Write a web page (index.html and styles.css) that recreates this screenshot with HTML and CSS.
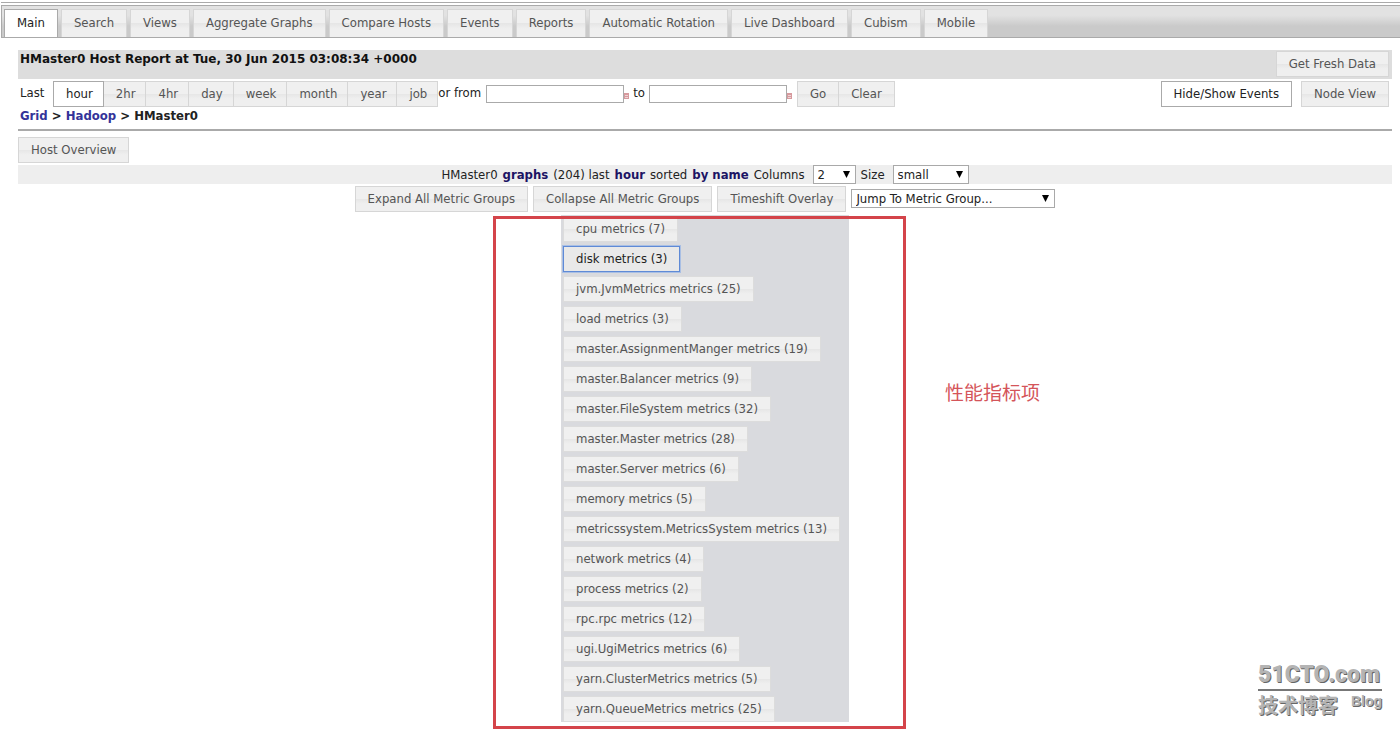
FILE: index.html
```html
<!DOCTYPE html>
<html lang="en">
<head>
<meta charset="utf-8">
<title>HMaster0 Host Report</title>
<link rel="stylesheet" href="styles.css">
</head>
<body>
<nav class="tabs">
<a class="btn tab active" href="#">Main</a>
<a class="btn tab" href="#">Search</a>
<a class="btn tab" href="#">Views</a>
<a class="btn tab" href="#">Aggregate Graphs</a>
<a class="btn tab" href="#">Compare Hosts</a>
<a class="btn tab" href="#">Events</a>
<a class="btn tab" href="#">Reports</a>
<a class="btn tab" href="#">Automatic Rotation</a>
<a class="btn tab" href="#">Live Dashboard</a>
<a class="btn tab" href="#">Cubism</a>
<a class="btn tab" href="#">Mobile</a>
</nav>
<main class="page">
<header class="title-bar">
<h1 class="title">HMaster0 Host Report at Tue, 30 Jun 2015 03:08:34 +0000</h1>
<button class="btn" type="button">Get Fresh Data</button>
</header>
<form class="range">
<span class="last">Last</span>
<div class="joined periods">
<button class="btn active" type="button">hour</button>
<button class="btn" type="button">2hr</button>
<button class="btn" type="button">4hr</button>
<button class="btn" type="button">day</button>
<button class="btn" type="button">week</button>
<button class="btn" type="button">month</button>
<button class="btn" type="button">year</button>
<button class="btn" type="button">job</button>
</div>
<label class="from" for="cs">or from</label>
<input class="date" id="cs" type="text">
<svg class="cal" viewBox="0 0 5 6" aria-hidden="true"><path fill="#d79a9e" d="M0 0h5v6H0z"/><path fill="#efd5d6" d="M1 2h3v1H1zM1 4h3v1H1z"/></svg>
<label class="to" for="ce">to</label>
<input class="date" id="ce" type="text">
<svg class="cal" viewBox="0 0 5 6" aria-hidden="true"><path fill="#d79a9e" d="M0 0h5v6H0z"/><path fill="#efd5d6" d="M1 2h3v1H1zM1 4h3v1H1z"/></svg>
<div class="joined submit">
<button class="btn" type="button">Go</button>
<button class="btn" type="button">Clear</button>
</div>
<div class="views">
<button class="btn active" type="button">Hide/Show Events</button>
<button class="btn" type="button">Node View</button>
</div>
</form>
<div class="crumbs"><a href="#">Grid</a> &gt; <a href="#">Hadoop</a> &gt; HMaster0</div>
<div class="overview"><button class="btn" type="button">Host Overview</button></div>
<div class="graph-bar">
<span>HMaster0</span> <b>graphs</b> <span>(204) last</span> <b>hour</b> <span>sorted</span> <b>by name</b>
<label for="cols">Columns</label>
<span class="pick cols"><select id="cols"><option>2</option></select><svg class="arrow" viewBox="0 0 7 7" aria-hidden="true"><path d="M0 0h7L3.500 7z"/></svg></span>
<label for="size">Size</label>
<span class="pick size"><select id="size"><option>small</option></select><svg class="arrow" viewBox="0 0 7 7" aria-hidden="true"><path d="M0 0h7L3.500 7z"/></svg></span>
</div>
<div class="group-bar">
<button class="btn" type="button">Expand All Metric Groups</button>
<button class="btn" type="button">Collapse All Metric Groups</button>
<button class="btn" type="button">Timeshift Overlay</button>
<span class="pick jump"><select aria-label="Metric group"><option>Jump To Metric Group...</option></select><svg class="arrow" viewBox="0 0 7 7" aria-hidden="true"><path d="M0 0h7L3.500 7z"/></svg></span>
</div>
<section class="metrics">
<button class="btn" type="button">cpu metrics (7)</button>
<button class="btn focused" type="button">disk metrics (3)</button>
<button class="btn" type="button">jvm.JvmMetrics metrics (25)</button>
<button class="btn" type="button">load metrics (3)</button>
<button class="btn" type="button">master.AssignmentManger metrics (19)</button>
<button class="btn" type="button">master.Balancer metrics (9)</button>
<button class="btn" type="button">master.FileSystem metrics (32)</button>
<button class="btn" type="button">master.Master metrics (28)</button>
<button class="btn" type="button">master.Server metrics (6)</button>
<button class="btn" type="button">memory metrics (5)</button>
<button class="btn" type="button">metricssystem.MetricsSystem metrics (13)</button>
<button class="btn" type="button">network metrics (4)</button>
<button class="btn" type="button">process metrics (2)</button>
<button class="btn" type="button">rpc.rpc metrics (12)</button>
<button class="btn" type="button">ugi.UgiMetrics metrics (6)</button>
<button class="btn" type="button">yarn.ClusterMetrics metrics (5)</button>
<button class="btn" type="button">yarn.QueueMetrics metrics (25)</button>
<div class="frame"></div>
<p class="note" lang="zh">性能指标项</p>
</section>
</main>
<aside class="mark">
<div class="mark-site">51CTO.com</div>
<div class="mark-row"><span class="mark-cn" lang="zh">技术博客</span><span class="mark-blog">Blog</span></div>
</aside>
</body>
</html>
```
FILE: styles.css
```css
* { box-sizing: border-box; }
body {
  margin: 0;
  padding-top: 2px;
  font: 13px/16px "DejaVu Sans Condensed", "DejaVu Sans", sans-serif;
  color: #222;
  background: #fff;
  position: relative;
}
.btn {
  display: block;
  margin: 0;
  padding: 3px 12px;
  border: 1px solid #d6d6d6;
  background: linear-gradient(#f0f0f0 50%, #e6e6e6 50%, #efefef 70%);
  color: #555;
  font: inherit;
  line-height: 18px;
  text-decoration: none;
  white-space: nowrap;
}
.btn.active { background: #fff; border-color: #aaa; color: #222; }
.tabs {
  display: flex;
  gap: 3px;
  margin: 3px 0 0 1px;
  padding: 3px 2px 0;
  border: 1px solid #aaa;
  border-right: 0;
  background: linear-gradient(#e2e2e2 30%, #cacaca 65%);
  position: relative;
}
.tabs::before {
  content: "";
  position: absolute;
  inset: -4px 0 auto -1px;
  border-top: 1px solid #aaa;
}
.tab { padding: 4px 12px 5px; border-bottom: 0; }
.page { padding: 12px 8px 12px 18px; }
.title-bar {
  display: flex;
  justify-content: space-between;
  align-items: flex-start;
  padding: 1px 3px 2px 2px;
  background: #ddd;
}
.title { margin: 0; font: bold 12px/16px "DejaVu Sans", sans-serif; color: #111; }
.range { display: flex; align-items: flex-start; padding: 2px 3px 0 2px; }
.last { width: 33px; line-height: 24px; }
.joined { display: flex; }
.joined .btn + .btn { border-left: 0; }
.periods .btn { padding-right: 10px; }
.from, .to { line-height: 24px; }
.from { margin-right: 5px; }
.to { margin: 0 4px; }
.date {
  width: 138px;
  height: 18px;
  margin: 4px 0 0;
  border: 1px solid #aaa;
  background: #fff;
  font: inherit;
}
.cal { width: 5px; height: 6px; margin-top: 12px; }
.submit { margin-left: 5px; }
.views { display: flex; gap: 9px; margin-left: auto; }
.crumbs {
  padding: 0 2px 4px;
  border-bottom: 2px solid #aaa;
  font-weight: bold;
  line-height: 18px;
}
.crumbs a { color: #339; text-decoration: none; }
.overview { display: flex; padding: 6px 0 2px; }
.graph-bar {
  display: flex;
  justify-content: center;
  align-items: center;
  gap: 5px;
  background: #eee;
}
.graph-bar b { color: #1c1464; }
.pick { display: block; position: relative; }
.pick select {
  appearance: none;
  display: block;
  width: 100%;
  height: 19px;
  margin: 0;
  padding: 0 4px;
  border: 1px solid #a9a9a9;
  border-radius: 0;
  background: #fff;
  color: #222;
  font: inherit;
}
.arrow { position: absolute; top: 6px; right: 6px; width: 7px; height: 7px; }
.cols { width: 43px; margin-left: 3px; }
.size { width: 76px; margin-left: 3px; }
.jump { width: 204px; margin-top: 3px; }
.group-bar { display: flex; justify-content: center; gap: 5px; padding: 2px 0 3px; }
.metrics {
  position: relative;
  display: flex;
  flex-direction: column;
  align-items: flex-start;
  gap: 4px;
  width: 288px;
  margin: 0 auto;
  padding: 1px 2px 0;
  background: #d9dade;
}
.metrics .btn { border-color: #dcdcdc; }
.metrics .btn.focused {
  border-color: #5f8ad6;
  box-shadow: 0 0 0 1px #a9bfe4;
  color: #222;
  background: #e9e9e9;
}
.frame {
  position: absolute;
  inset: 1px -57px -7px -68px;
  border: 3px solid #d4444a;
  pointer-events: none;
}
.note {
  position: absolute;
  top: 165px;
  left: 384px;
  margin: 0;
  color: #d4555a;
  font: 19px/24px "Noto Sans CJK SC", sans-serif;
  white-space: nowrap;
}
.mark {
  position: absolute;
  top: 660px;
  right: 18px;
  width: 124px;
  color: #b4b4b4;
  text-shadow: 1px 1px 0 #666;
}
.mark-site {
  border-bottom: 2px solid #777;
  font: 900 23px/29px Roboto, sans-serif;
  white-space: nowrap;
}
.mark-row { display: flex; justify-content: space-between; }
.mark-cn { font: bold 20px/27px "Noto Sans CJK SC", sans-serif; }
.mark-blog { font: bold 14px/20px "Liberation Sans", sans-serif; }
```
